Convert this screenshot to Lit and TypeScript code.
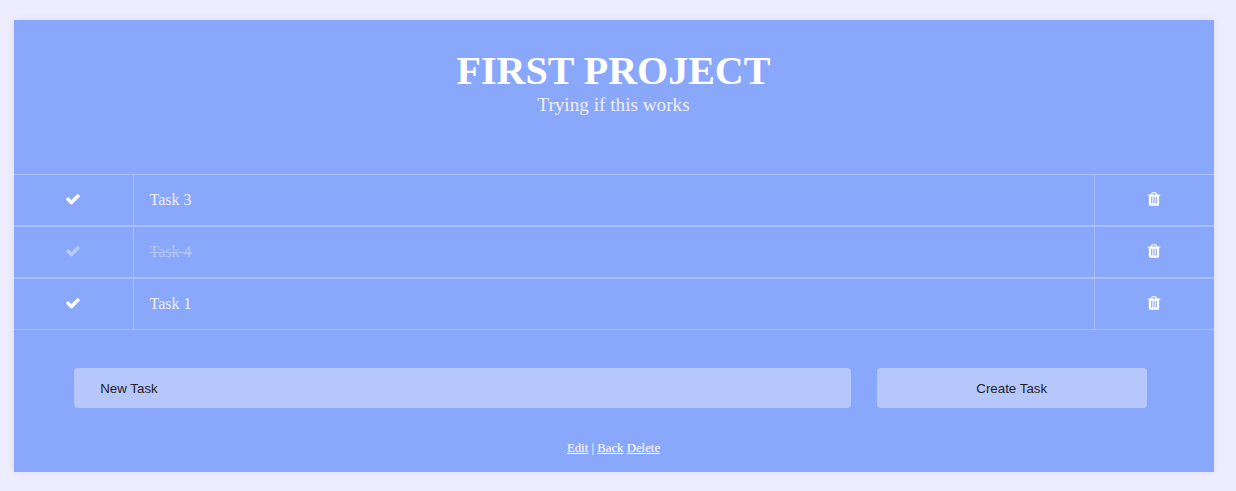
import { LitElement, html, css } from "lit";
import { customElement, property, state } from "lit/decorators.js";
import { classMap } from "lit/directives/class-map.js";

interface Task {
  name: string;
  done: boolean;
}

@customElement("task-row")
class TaskRow extends LitElement {
  @property({ attribute: false }) task!: Task;

  static styles = css`
    :host {
      display: grid;
      grid-template-columns: 120px 1fr 120px;
      box-sizing: border-box;
      height: 52px;
      border-top: 1px solid #a9bffc;
      border-bottom: 1px solid #a9bffc;
    }
    .cell {
      display: flex;
      align-items: center;
      justify-content: center;
      box-sizing: border-box;
    }
    .check {
      border-right: 1px solid #a9bffc;
    }
    .trash {
      border-left: 1px solid #a9bffc;
    }
    .check,
    .trash {
      padding: 0 1px 2px 0;
    }
    .name {
      justify-content: flex-start;
      padding-left: 16px;
      font-size: 16px;
      color: #eee;
    }
    .done {
      opacity: 0.4;
    }
    .name .done {
      text-decoration: line-through;
    }
    svg {
      display: block;
      width: 16px;
      height: 16px;
      fill: #fff;
    }
  `;

  render() {
    const done = classMap({ done: this.task.done });
    return html`
      <div class="cell check">
        <svg class=${done} viewBox="0 0 1792 1792">
          <path d="M1671 566q0 40-28 68l-724 724-136 136q-28 28-68 28t-68-28l-136-136-362-362q-28-28-28-68t28-68l136-136q28-28 68-28t68 28l294 295 656-657q28-28 68-28t68 28l136 136q28 28 28 68z" />
        </svg>
      </div>
      <div class="cell name"><span class=${done}>${this.task.name}</span></div>
      <div class="cell trash">
        <svg viewBox="0 0 1792 1792">
          <path d="M704 1376v-704q0-14-9-23t-23-9h-64q-14 0-23 9t-9 23v704q0 14 9 23t23 9h64q14 0 23-9t9-23zm256 0v-704q0-14-9-23t-23-9h-64q-14 0-23 9t-9 23v704q0 14 9 23t23 9h64q14 0 23-9t9-23zm256 0v-704q0-14-9-23t-23-9h-64q-14 0-23 9t-9 23v704q0 14 9 23t23 9h64q14 0 23-9t9-23zm-544-992h448l-48-117q-7-9-17-11h-317q-10 2-17 11zm928 32v64q0 14-9 23t-23 9h-96v948q0 83-47 143.500t-113 60.500h-832q-66 0-113-58.500t-47-141.500v-952h-96q-14 0-23-9t-9-23v-64q0-14 9-23t23-9h309l70-167q15-37 54-63t79-26h320q40 0 79 26t54 63l70 167h309q14 0 23 9t9 23z" />
        </svg>
      </div>
    `;
  }
}

@customElement("app-root")
class AppRoot extends LitElement {
  @state() private tasks: Task[] = [
    { name: "Task 3", done: false },
    { name: "Task 4", done: true },
    { name: "Task 1", done: false },
  ];

  static styles = css`
    :host {
      display: block;
      box-sizing: border-box;
      height: 491px;
      padding: 20px 22.5px 19px 13.5px;
      background: #eeecff;
      font-family: "Liberation Serif", serif;
    }
    .panel {
      display: flex;
      flex-direction: column;
      box-sizing: border-box;
      height: 452px;
      background: #8aa8fb;
      box-shadow: 0 0 8px rgba(0, 0, 0, 0.07);
    }
    header {
      box-sizing: border-box;
      height: 154px;
      padding-top: 28px;
      text-align: center;
    }
    h1 {
      margin: 0;
      font-size: 40px;
      line-height: 46px;
      color: #fff;
    }
    p {
      margin: 0;
      font-size: 19.2px;
      line-height: 22px;
      color: #eee;
    }
    form {
      display: grid;
      grid-template-columns: 777px 270px;
      column-gap: 26px;
      margin: 38px 0 0 60.2px;
    }
    input,
    button {
      box-sizing: border-box;
      height: 40px;
      margin: 0;
      border: 0;
      border-radius: 4px;
      background: #b6c8fb;
      font: 13.333px "Liberation Sans", sans-serif;
      color: #222;
    }
    input {
      padding: 0 26.5px;
    }
    input::placeholder {
      color: #222;
      opacity: 1;
    }
    footer {
      margin-top: 32px;
      text-align: center;
      font-size: 12.8px;
      line-height: 16px;
      color: #fff;
    }
    a {
      color: #fff;
    }
  `;

  render() {
    return html`
      <main class="panel">
        <header>
          <h1>FIRST PROJECT</h1>
          <p>Trying if this works</p>
        </header>
        <section>${this.tasks.map((t) => html`<task-row .task=${t}></task-row>`)}</section>
        <form @submit=${(e: Event) => e.preventDefault()}>
          <input type="text" placeholder="New Task" />
          <button type="submit">Create Task</button>
        </form>
        <footer><a href="#">Edit</a> | <a href="#">Back</a> <a href="#">Delete</a></footer>
      </main>
    `;
  }
}
